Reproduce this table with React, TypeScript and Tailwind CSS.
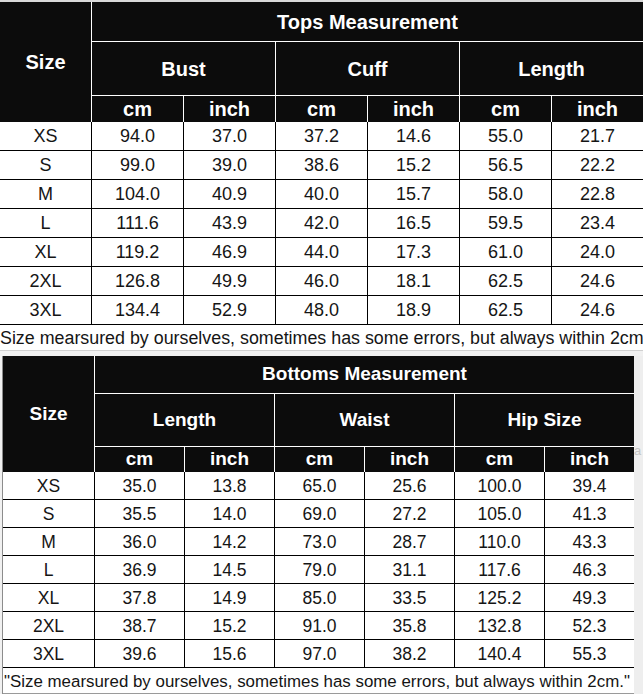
const tops = [
  ["XS", "94.0", "37.0", "37.2", "14.6", "55.0", "21.7"],
  ["S", "99.0", "39.0", "38.6", "15.2", "56.5", "22.2"],
  ["M", "104.0", "40.9", "40.0", "15.7", "58.0", "22.8"],
  ["L", "111.6", "43.9", "42.0", "16.5", "59.5", "23.4"],
  ["XL", "119.2", "46.9", "44.0", "17.3", "61.0", "24.0"],
  ["2XL", "126.8", "49.9", "46.0", "18.1", "62.5", "24.6"],
  ["3XL", "134.4", "52.9", "48.0", "18.9", "62.5", "24.6"],
];

const bottoms = [
  ["XS", "35.0", "13.8", "65.0", "25.6", "100.0", "39.4"],
  ["S", "35.5", "14.0", "69.0", "27.2", "105.0", "41.3"],
  ["M", "36.0", "14.2", "73.0", "28.7", "110.0", "43.3"],
  ["L", "36.9", "14.5", "79.0", "31.1", "117.6", "46.3"],
  ["XL", "37.8", "14.9", "85.0", "33.5", "125.2", "49.3"],
  ["2XL", "38.7", "15.2", "91.0", "35.8", "132.8", "52.3"],
  ["3XL", "39.6", "15.6", "97.0", "38.2", "140.4", "55.3"],
];

const head = "flex items-center justify-center bg-[#0c0c0c] text-white font-bold";
const cell = "flex items-center justify-center bg-white pt-px text-[#151515]";

export default function App() {
  return (
    <div className="h-[694px] w-[643px] overflow-hidden bg-white font-['Liberation_Sans',Arial,sans-serif]">
      {/* Tops */}
      <div className="border-t-2 border-[#d9d9d9]">
        <div className="grid grid-cols-[repeat(7,91px)] grid-rows-[39px_53px_26px] gap-px bg-white text-[20px]">
          <div className={`${head} row-span-3`}>Size</div>
          <div className={`${head} col-span-6`}>Tops Measurement</div>
          <div className={`${head} col-span-2`}>Bust</div>
          <div className={`${head} col-span-2`}>Cuff</div>
          <div className={`${head} col-span-2`}>Length</div>
          {["cm", "inch", "cm", "inch", "cm", "inch"].map((u, i) => (
            <div key={i} className={head}>
              {u}
            </div>
          ))}
        </div>
        <div className="grid auto-rows-[28px] grid-cols-[repeat(7,91px)] gap-px border-b border-black bg-black text-[18px]">
          {tops.flat().map((v, i) => (
            <div key={i} className={cell}>
              {v}
            </div>
          ))}
        </div>
        <div className="h-[25px] whitespace-nowrap pt-px text-[17.85px] leading-[25px] text-[#151515]">
          Size mearsured by ourselves, sometimes has some errors, but always within 2cm
        </div>
      </div>

      {/* Bottoms */}
      <div className="flex h-[344px] border-t border-[#d0d0d0] bg-[#f1f1f1] pt-[5px] pl-[2px]">
        <div className="w-[632px] border-l border-[#8c8c8c] bg-white">
          <div className="grid grid-cols-[91px_repeat(6,89px)] grid-rows-[37px_52px_25px] gap-px bg-white text-[19px]">
            <div className={`${head} row-span-3`}>Size</div>
            <div className={`${head} col-span-6`}>Bottoms Measurement</div>
            <div className={`${head} col-span-2`}>Length</div>
            <div className={`${head} col-span-2`}>Waist</div>
            <div className={`${head} col-span-2`}>Hip Size</div>
            {["cm", "inch", "cm", "inch", "cm", "inch"].map((u, i) => (
              <div key={i} className={head}>
                {u}
              </div>
            ))}
          </div>
          <div className="grid auto-rows-[27px] grid-cols-[91px_repeat(6,89px)] gap-px border-b border-black bg-black text-[17.5px]">
            {bottoms.flat().map((v, i) => (
              <div key={i} className={cell}>
                {v}
              </div>
            ))}
          </div>
          <div className="h-[26px] whitespace-nowrap border-b border-[#9a9a9a] pl-px pt-px text-[16.9px] leading-[25px] text-[#151515]">
            "Size mearsured by ourselves, sometimes has some errors, but always within 2cm."
          </div>
        </div>
        <div className="w-[9px] overflow-hidden bg-[#eeeeee] pt-[85px] text-[13px] text-[#c4c4c4]">a</div>
      </div>
    </div>
  );
}
